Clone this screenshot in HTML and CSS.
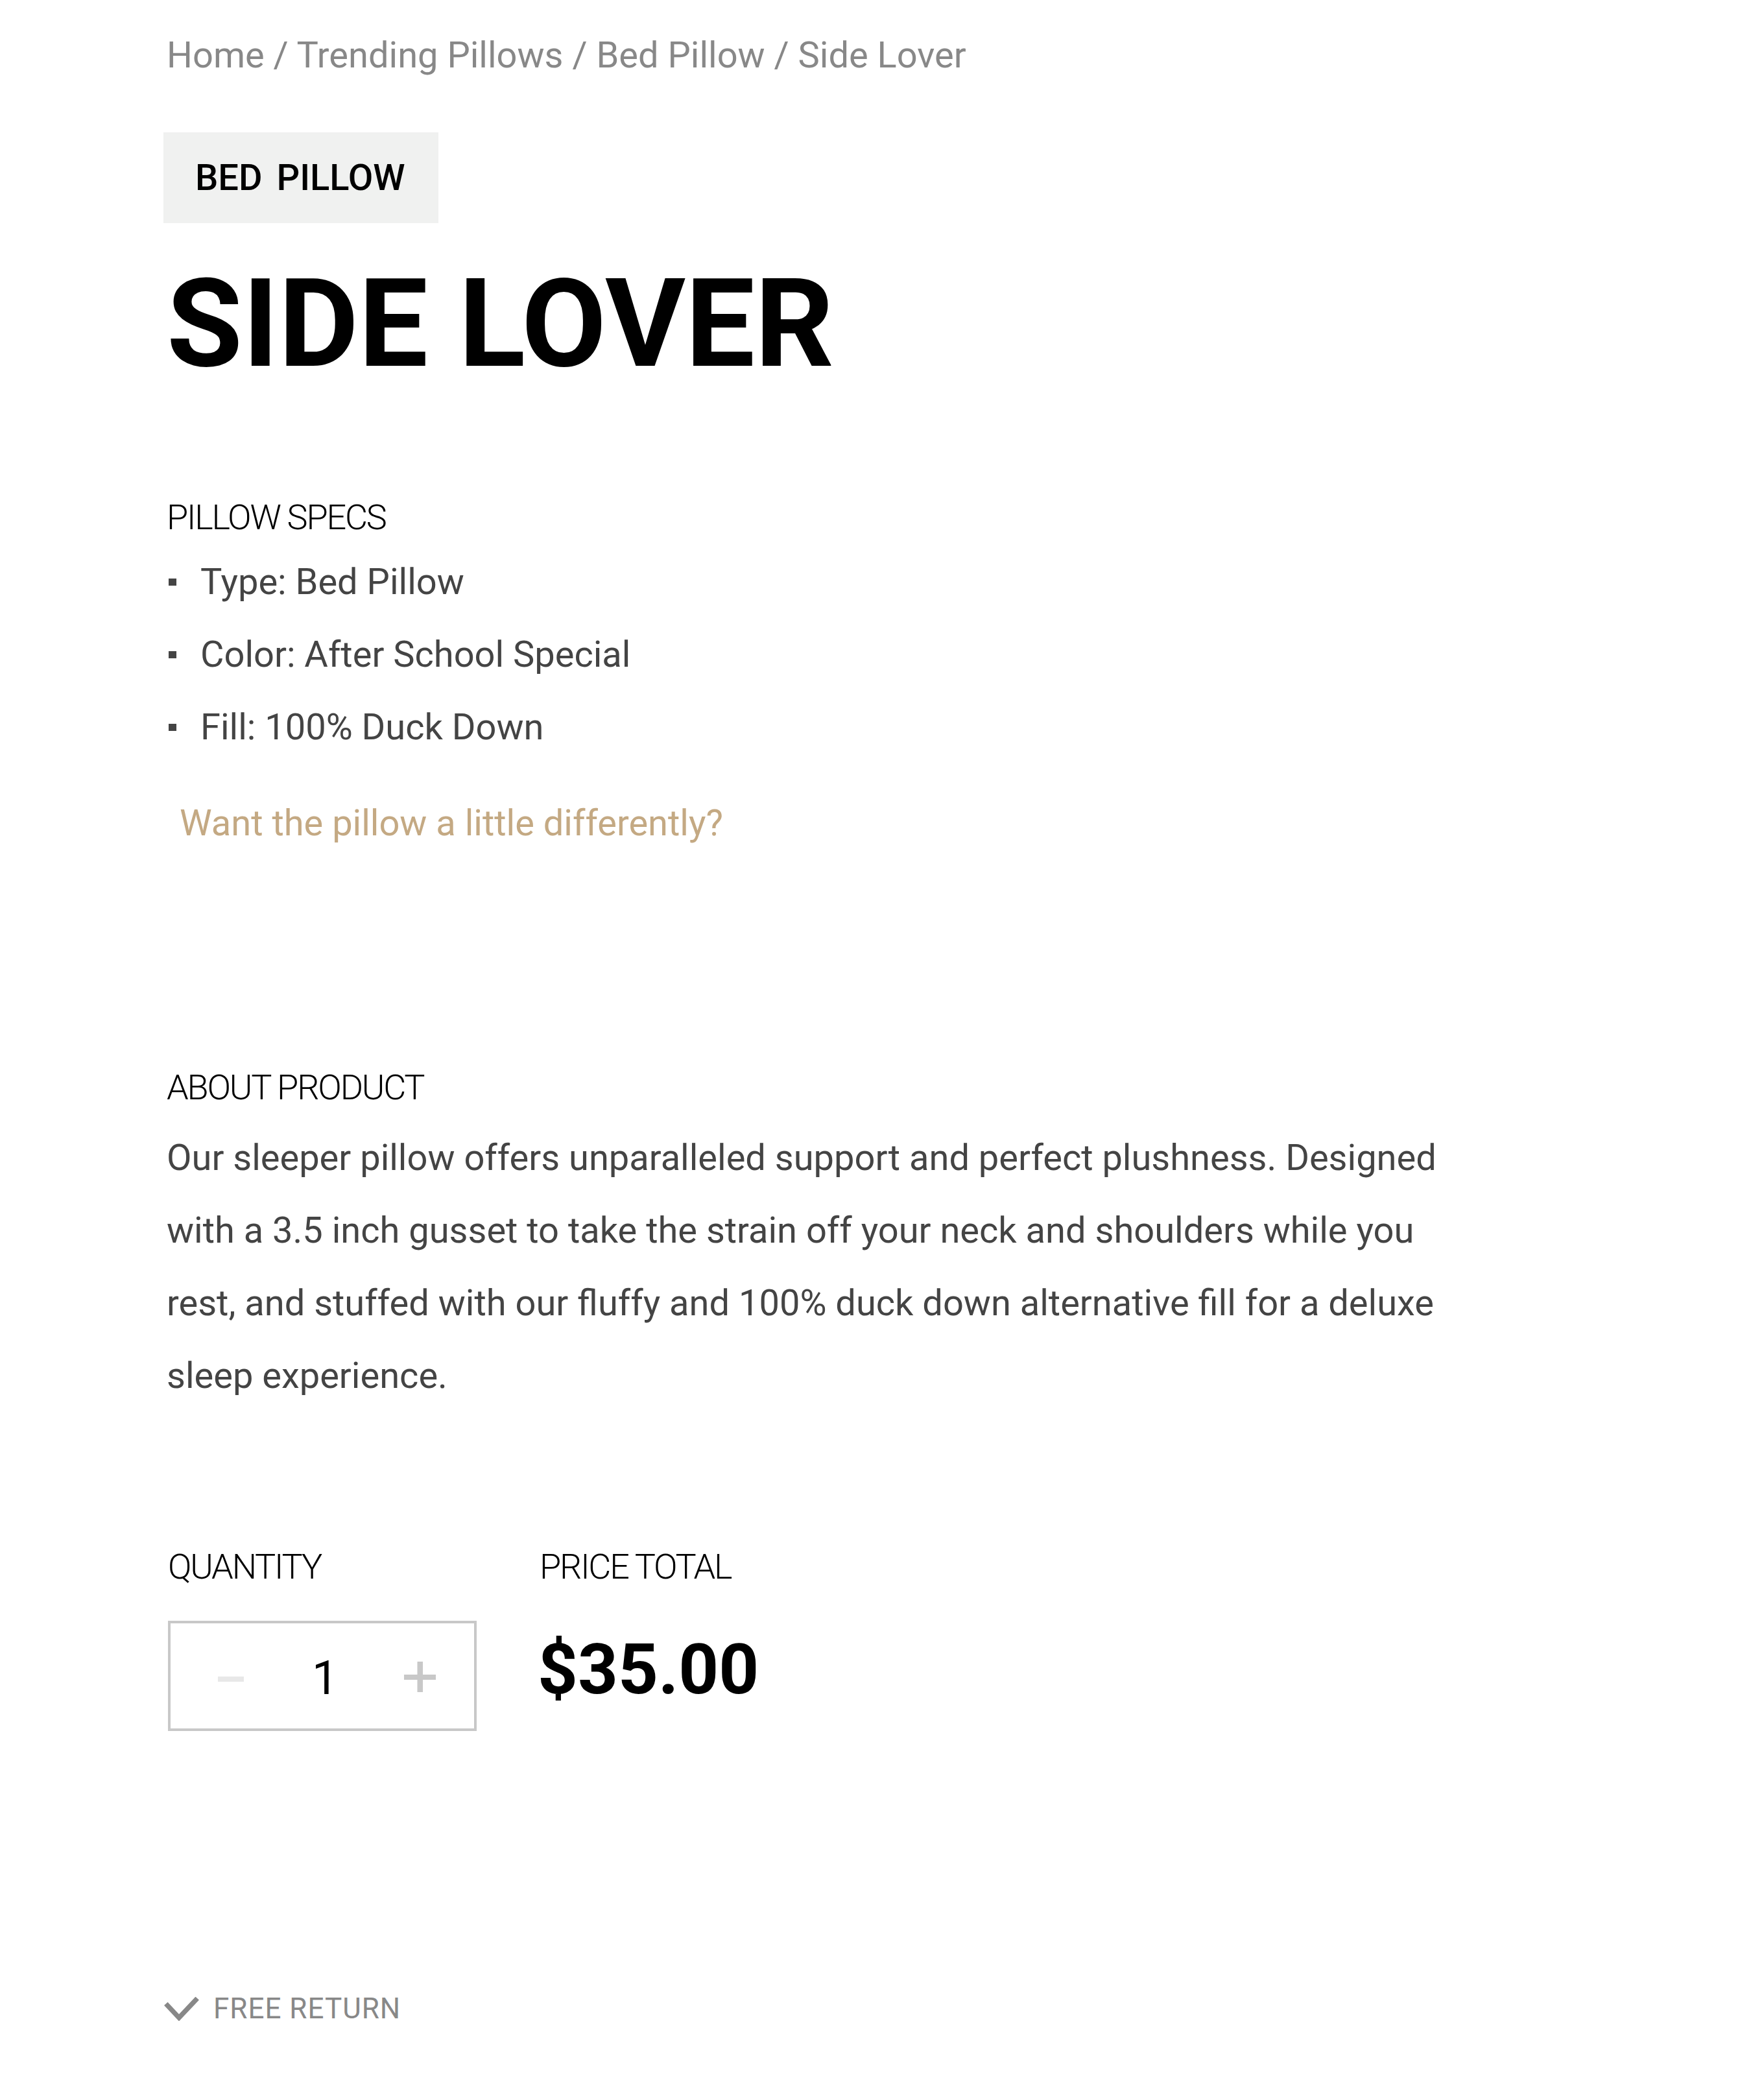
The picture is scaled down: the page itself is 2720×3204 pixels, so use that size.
FILE: index.html
```html
<!DOCTYPE html>
<html lang="en">
<head>
<meta charset="utf-8">
<title>Side Lover</title>
<link rel="stylesheet" href="styles.css">
</head>
<body>
<main class="product">
  <nav class="breadcrumb">
    <a class="crumb" href="#">Home</a> / <a class="crumb" href="#">Trending Pillows</a> / <a class="crumb" href="#">Bed Pillow</a> / <span class="crumb">Side Lover</span>
  </nav>

  <div class="badge-row">
    <span class="badge">BED PILLOW</span>
  </div>

  <h1 class="title">SIDE LOVER</h1>

  <section class="specs">
    <h2 class="label">PILLOW SPECS</h2>
    <ul class="spec-list">
      <li>Type: Bed Pillow</li>
      <li>Color: After School Special</li>
      <li>Fill: 100% Duck Down</li>
    </ul>
    <a class="custom-link" href="#">Want the pillow a little differently?</a>
  </section>

  <section class="about">
    <h2 class="label">ABOUT PRODUCT</h2>
    <p class="about-text">Our sleeper pillow offers unparalleled support and perfect plushness. Designed with a 3.5 inch gusset to take the strain off your neck and shoulders while you rest, and stuffed with our fluffy and 100% duck down alternative fill for a deluxe sleep experience.</p>
  </section>

  <section class="buy">
    <div class="buy-col qty-col">
      <h2 class="label">QUANTITY</h2>
      <div class="qty-box">
        <span class="qty-minus"></span>
        <span class="qty-value">1</span>
        <svg class="qty-plus" width="49" height="47" viewBox="0 0 49 47" aria-hidden="true">
          <rect x="0" y="20" width="49" height="8" fill="#c8c8c8"/>
          <rect x="20.5" y="0" width="8.5" height="47" fill="#c8c8c8"/>
        </svg>
      </div>
    </div>
    <div class="buy-col price-col">
      <h2 class="label">PRICE TOTAL</h2>
      <div class="price">$35.00</div>
    </div>
  </section>

  <div class="perk">
    <svg class="perk-check" width="54" height="37" viewBox="0 0 54 37" aria-hidden="true">
      <polyline points="2.8,10.5 23,32 51.2,2.2" fill="none" stroke="#888" stroke-width="7.5" stroke-linejoin="miter"/>
    </svg>
    <span class="perk-text">FREE RETURN</span>
  </div>
</main>
</body>
</html>
```

FILE: styles.css
```css
* {
  box-sizing: border-box;
  margin: 0;
  padding: 0;
}

html, body {
  background: #ffffff;
}

body {
  font-family: Roboto, "Liberation Sans", Arial, sans-serif;
  color: #444444;
}

.product {
  width: 2257px;
  padding: 43px 0 120px 257px;
}

/* breadcrumb */
.breadcrumb {
  font-size: 56px;
  line-height: 84px;
  color: #888888;
}

.crumb {
  color: inherit;
  text-decoration: none;
}

/* badge */
.badge-row {
  display: flex;
  margin-top: 77px;
}

.badge {
  display: block;
  margin-left: -5px;
  padding: 0 51px 0 49px;
  background: #f0f1f0;
  color: #000000;
  font-size: 56px;
  font-weight: 500;
  line-height: 140px;
  word-spacing: 8px;
}

/* title */
.title {
  margin-top: 60px;
  font-size: 190px;
  line-height: 190px;
  font-weight: 700;
  color: #000000;
}

/* section labels */
.label {
  font-size: 54px;
  line-height: 64px;
  font-weight: 300;
  letter-spacing: -2.2px;
  color: #000000;
}

.specs .label {
  margin-top: 172px;
}

.spec-list {
  margin-top: 11px;
  list-style: none;
}

.spec-list li {
  font-size: 56px;
  line-height: 112px;
  color: #444444;
}

.spec-list li::before {
  content: "";
  display: inline-block;
  width: 12px;
  height: 11px;
  margin: 0 37px 0 3px;
  vertical-align: 13px;
  background: #444444;
}

.custom-link {
  display: block;
  margin-top: 36px;
  padding-left: 20px;
  font-size: 56px;
  line-height: 112px;
  color: #c4a983;
  text-decoration: none;
}

/* about */
.about .label {
  margin-top: 320px;
}

.about-text {
  width: 2000px;
  margin-top: 20px;
  font-size: 56px;
  line-height: 112px;
  color: #444444;
}

/* quantity and price */
.buy {
  display: flex;
  gap: 97px;
  margin-top: 207px;
  margin-left: 2px;
}

.qty-col {
  width: 476px;
}

.qty-box {
  display: flex;
  align-items: flex-start;
  height: 170px;
  margin-top: 51px;
  padding-left: 73px;
  border: 4px solid #c8c8c8;
}

.qty-minus {
  display: block;
  width: 40px;
  height: 8px;
  margin-top: 82px;
  background: #e8e8e8;
}

.qty-value {
  display: block;
  width: 40.5px;
  margin-top: 49px;
  margin-left: 105px;
  font-size: 72px;
  line-height: 72px;
  color: #000000;
}

.qty-plus {
  display: block;
  margin-top: 59px;
  margin-left: 101px;
}

.price {
  margin-top: 72px;
  margin-left: -3px;
  font-size: 108px;
  line-height: 108px;
  font-weight: 700;
  letter-spacing: 0;
  color: #000000;
}

/* perk */
.perk {
  display: flex;
  align-items: center;
  gap: 22px;
  margin-top: 402px;
  margin-left: -4px;
}

.perk-check {
  display: block;
}

.perk-text {
  font-size: 44px;
  line-height: 52px;
  letter-spacing: 1px;
  color: #888888;
}
```
